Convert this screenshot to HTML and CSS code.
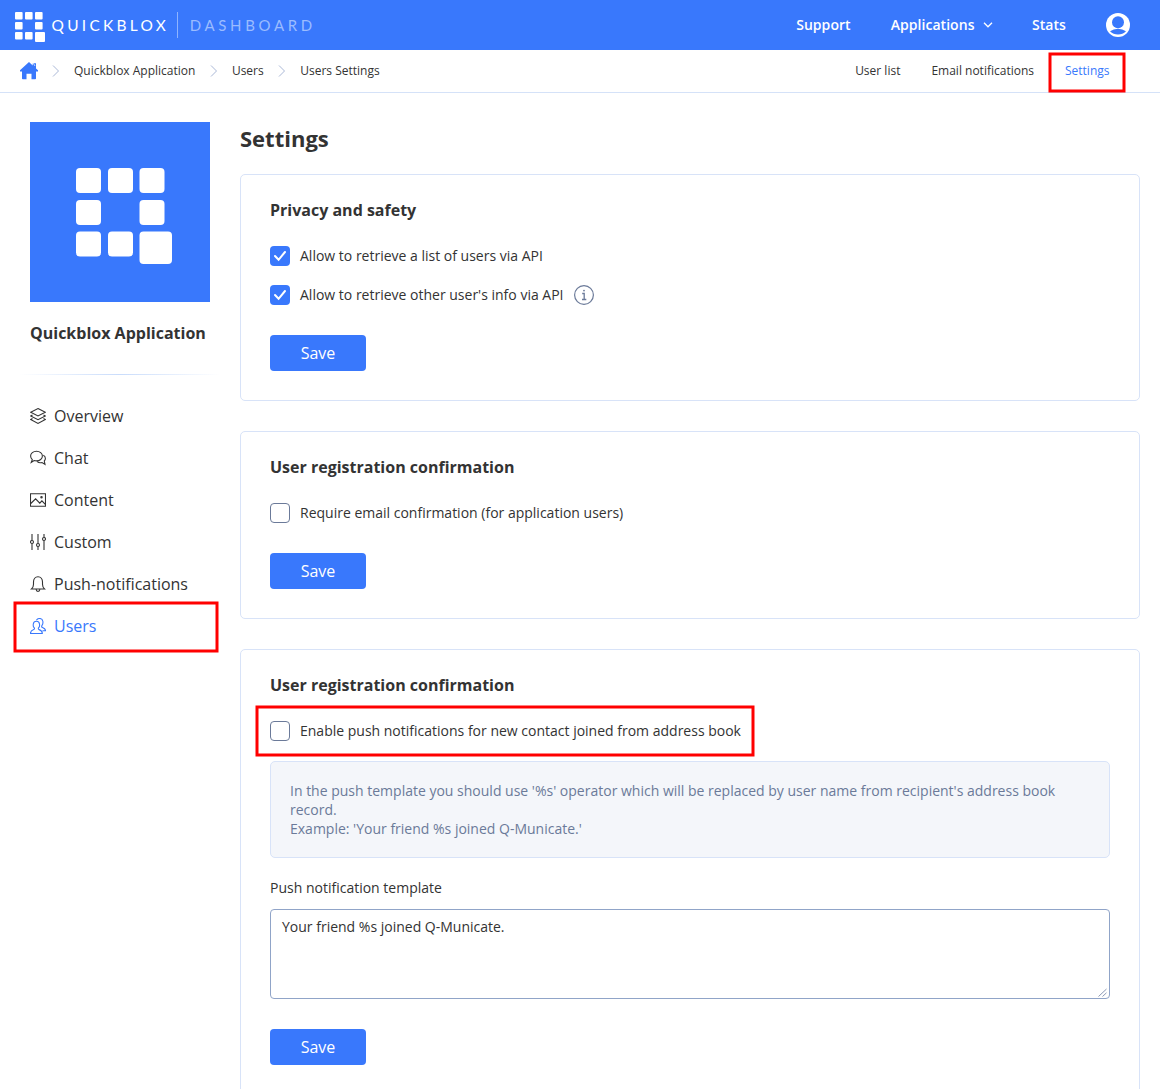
FILE: index.html
```html
<!DOCTYPE html>
<html lang="en">
<head>
<meta charset="utf-8">
<title>Users Settings</title>
<link rel="stylesheet" href="styles.css">
</head>
<body>
<header class="topbar">
  <svg class="logo" width="300" height="32" viewBox="0 0 300 32">
    <g fill="#fff">
      <rect x="0" y="2" width="7.600" height="7.600" rx="1"/><rect x="10" y="2" width="7.600" height="7.600" rx="1"/><rect x="20" y="2" width="7.600" height="7.600" rx="1"/>
      <rect x="0" y="12" width="7.600" height="7.600" rx="1"/><rect x="20" y="12" width="7.600" height="7.600" rx="1"/>
      <rect x="0" y="22" width="7.600" height="7.600" rx="1"/><rect x="10" y="22" width="7.600" height="7.600" rx="1"/><rect x="20" y="22" width="10" height="10" rx="1"/>
    </g>
    <text class="logo-text" x="36.500" y="21" textLength="117.500" lengthAdjust="spacingAndGlyphs">QUICKBLOX</text>
    <path d="M162.500 2v26" stroke="#8fb4ff"/>
    <text class="logo-text logo-sub" x="174.800" y="21" textLength="126" lengthAdjust="spacingAndGlyphs">DASHBOARD</text>
  </svg>
  <nav class="topnav">
    <a>Support</a>
    <a class="apps">Applications <svg width="10" height="6" viewBox="0 0 10 6" fill="none" stroke="#fff" stroke-width="1.300"><path d="M1 .8l4 4 4-4"/></svg></a>
    <a>Stats</a>
    <svg class="avatar" width="24" height="24" viewBox="0 0 24 24"><circle cx="12" cy="12" r="12" fill="#fff"/><circle cx="12" cy="9.200" r="6" fill="#3978fc"/><path d="M4 18.300q3.500-2.500 8-2.500t8 2.500q-3.300 3.300-8 3.300t-8-3.300z" fill="#3978fc"/></svg>
  </nav>
</header>
<div class="subbar">
  <div class="crumbs">
    <svg class="home" width="18" height="18" viewBox="0 0 18 18" fill="#3978fc"><path d="M9 0l3.700 3.400V2.100L12 1.200h4v5.200L18 8.300v1.200h-2V16.500q0 .8-.8.8h-3.700v-5.500H6.500v5.500H2.800q-.8 0-.8-.8V9.500H0V8.300z"/><path d="M11.500 1.500h2l1.500 2.500" stroke="#fff" stroke-width=".7" fill="none"/></svg>
    <svg class="sep" width="8" height="12" viewBox="0 0 8 12"><path d="M1 .5L6.500 6 1 11.500"/></svg>
    <span class="crumb-app">Quickblox Application</span>
    <svg class="sep" width="8" height="12" viewBox="0 0 8 12"><path d="M1 .5L6.500 6 1 11.500"/></svg>
    <span class="crumb-users">Users</span>
    <svg class="sep" width="8" height="12" viewBox="0 0 8 12"><path d="M1 .5L6.500 6 1 11.500"/></svg>
    <span>Users Settings</span>
  </div>
  <nav class="tabs">
    <a>User list</a><a>Email notifications</a><a class="tab-active">Settings<svg class="mark mark-tab" width="78" height="41"><rect x="2" y="2" width="74" height="37"/></svg></a>
  </nav>
</div>
<div class="page">
  <aside class="sidebar">
    <svg class="app-image" width="180" height="180" viewBox="0 0 180 180">
      <path fill="#3978fc" d="M0 0h180v180H0z"/>
      <g fill="#fff">
        <rect x="46" y="46" width="25" height="25" rx="4"/><rect x="78" y="46" width="25" height="25" rx="4"/><rect x="109.500" y="46" width="25" height="25" rx="4"/>
        <rect x="46" y="78" width="25" height="25" rx="4"/><rect x="109.500" y="78" width="25" height="25" rx="4"/>
        <rect x="46" y="109.500" width="25" height="25" rx="4"/><rect x="78" y="109.500" width="25" height="25" rx="4"/><rect x="109.500" y="109.500" width="32.500" height="32.500" rx="4"/>
      </g>
    </svg>
    <div class="app-name">Quickblox Application</div>
    <div class="divider"></div>
    <nav class="menu">
      <a><svg viewBox="0 0 16 16"><path d="M8 .6l7.300 3.700L8 8 .7 4.300zM2.500 7L.7 8 8 11.700 15.300 8l-1.800-1M2.500 10.600l-1.800 1L8 15.400l7.300-3.800-1.800-1"/></svg>Overview</a>
      <a><svg viewBox="0 0 16 16"><path d="M1.300 12.300l1-2.700C1.300 8.700.6 7.500.6 6.100c0-2.700 2.600-4.800 5.900-4.800s5.900 2.100 5.900 4.800-2.600 4.800-5.900 4.800c-.9 0-1.700-.1-2.400-.4zM13.300 5.300c1.300.6 2.100 1.800 2.100 3.200 0 1-.4 1.800-1.100 2.500l.7 3.300-3-1.700c-1.600.4-3.600.1-4.800-.9"/></svg>Chat</a>
      <a><svg viewBox="0 0 16 16"><path d="M.5 1.700h15v12.600H.5zM.8 11.500l4.800-4.700 4.200 4.300 2.100-2.200 3.400 3.500"/><circle cx="11.500" cy="5.200" r=".7"/></svg>Content</a>
      <a><svg viewBox="0 0 16 16"><path d="M2 0v6.500M2 9.500V16M8 0v9.500M8 12.500V16M14 0v3.500M14 6.500V16"/><circle cx="2" cy="8" r="1.500"/><circle cx="8" cy="11" r="1.500"/><circle cx="14" cy="5" r="1.500"/></svg>Custom</a>
      <a><svg viewBox="0 0 16 16"><path d="M1.500 13h13c-1.500-1.300-2-2.500-2-4.700V6c0-3-1.700-5.300-4.500-5.300S3.500 3 3.500 6v2.300c0 2.200-.5 3.400-2 4.700zM6.100 13.300c.1 1.300.8 2.100 1.900 2.100s1.800-.8 1.900-2.100"/></svg>Push-notifications</a>
      <a class="active"><svg viewBox="0 0 16 16"><path d="M.5 15.500c-.1-2.600 1-3.200 3.200-3.900 1-.3.900-1.300.4-1.900C2.900 8.500 2.400 3.200 6.400 3.200s3.500 5.300 2.300 6.500c-.5.600-.6 1.600.4 1.900 2.200.7 3.300 1.300 3.200 3.900zM6.500 2.100C7.200 1 8.200.5 9.700.5c3.900 0 3.700 5 2.300 6.900-.5.600-.5 1.800.5 2.200 2 .8 3.100 1.300 3 3.200h-3"/></svg>Users<svg class="mark mark-users" width="206" height="52"><rect x="2" y="2" width="202" height="48"/></svg></a>
    </nav>
  </aside>
  <main class="main">
    <h1>Settings</h1>
    <section class="card">
      <h2>Privacy and safety</h2>
      <label class="check"><span class="box on"><svg width="14" height="12" viewBox="0 0 14 12"><path d="M2 6l3.600 3.800L12 2"/></svg></span><span class="check-text">Allow to retrieve a list of users via API</span></label>
      <label class="check"><span class="box on"><svg width="14" height="12" viewBox="0 0 14 12"><path d="M2 6l3.600 3.800L12 2"/></svg></span><span class="check-text">Allow to retrieve other user's info via API</span>
        <svg class="info" width="20" height="20" viewBox="0 0 20 20" fill="none" stroke="#6b7a99"><circle cx="10" cy="10" r="9.400" stroke-width="1.200"/><path d="M8.200 8.500h2v6M8 14.500h4.300" stroke-width="1.300"/><circle cx="10" cy="5.600" r=".9" fill="#6b7a99" stroke="none"/></svg></label>
      <button class="save">Save</button>
    </section>
    <section class="card">
      <h2>User registration confirmation</h2>
      <label class="check"><span class="box"></span><span class="check-text">Require email confirmation (for application users)</span></label>
      <button class="save">Save</button>
    </section>
    <section class="card">
      <h2>User registration confirmation</h2>
      <label class="check push"><span class="box"></span><span class="check-text">Enable push notifications for new contact joined from address book</span><svg class="mark mark-push" width="500" height="52"><rect x="2" y="2" width="496" height="48"/></svg></label>
      <div class="note">In the push template you should use '%s' operator which will be replaced by user name from recipient's address book record.<br>Example: 'Your friend %s joined Q-Municate.'</div>
      <div class="field-label">Push notification template</div>
      <div class="area">Your friend %s joined Q-Municate.<svg class="grip" width="9" height="9" viewBox="0 0 9 9" stroke="#8b98b5"><path d="M.5 8.500l8-7.500M4.500 8.500l4-3.700"/></svg></div>
      <button class="save">Save</button>
    </section>
  </main>
</div>
</body>
</html>
```
FILE: styles.css
```css
* { box-sizing: border-box; }
body { margin: 0; height: 1089px; overflow: hidden; background: #fff; color: #333; font: 14px/19px "Open Sans", sans-serif; }
svg { display: block; flex: none; }
.topbar { height: 50px; background: #3978fc; display: flex; justify-content: space-between; padding: 0 30px 0 15px; align-items: center; }
.logo { overflow: visible; margin-top: 2px; }
.logo-text { font: 400 16px Lato, sans-serif; letter-spacing: 3.4px; fill: #fff; }
.logo-sub { letter-spacing: 3.9px; fill: #9bbcff; }
.topnav { display: flex; align-items: center; color: #fff; font-weight: 600; letter-spacing: .05px; }
.topnav a { margin: 0 40px 2px 0; }
.topnav .apps { display: flex; align-items: center; gap: 8px; margin-right: 39.5px; }
.apps svg { margin-top: 1px; }
.subbar { height: 43px; border-bottom: 1px solid #d5e2f8; display: flex; justify-content: space-between; padding: 0 50.5px 2px 20px; font-size: 12px; }
.crumbs { display: flex; align-items: center; }
.home { margin-top: 2px; }
.sep { fill: none; stroke: #a9b7d6; margin: 2px 14px 0; }
.crumb-app, .crumb-users { margin-right: .5px; }
.tabs { display: flex; gap: 31px; align-items: center; }
.tab-active { color: #3978fc; position: relative; }
.mark { position: absolute; pointer-events: none; }
.mark rect { fill: none; stroke: #f00; stroke-width: 3; }
.mark-tab { left: -17px; top: -9px; }
.page { display: flex; padding: 29px 20px 0 30px; gap: 30px; }
.sidebar { width: 180px; flex: none; }
.app-name { font: 700 16px/22px "Open Sans", sans-serif; margin-top: 20px; white-space: nowrap; }
.divider { height: 1px; margin: 30px -10px 0; background: linear-gradient(90deg, #fff, #c9dcfb 50%, #fff); }
.menu { margin-top: 20px; }
.menu a { position: relative; height: 42px; display: flex; align-items: center; gap: 8px; font-size: 16px; white-space: nowrap; }
.menu svg:first-child { width: 16px; height: 16px; fill: none; stroke: currentColor; stroke-width: 1.1; }
.menu .active { color: #3978fc; }
.mark-users { left: -17px; top: -4px; }
.main { flex: 1; }
h1 { font-size: 22px; line-height: 30px; margin: 1px 0 21px; }
.card { border: 1px solid #d8e3f8; border-radius: 5px; padding: 24px 29px 29px; margin-bottom: 30px; }
h2 { font-size: 16px; line-height: 22px; margin: 0 0 25px; }
.check { display: flex; align-items: center; height: 20px; margin-bottom: 19px; position: relative; }
.check-text { margin-bottom: 2px; }
.box { width: 20px; height: 20px; border: 1px solid #6b7a99; border-radius: 4px; margin-right: 10px; flex: none; display: flex; align-items: center; justify-content: center; }
.on { background: #3978fc; border: 0; }
.box path { fill: none; stroke: #fff; stroke-width: 2; stroke-linecap: round; }
.info { margin-left: 10px; }
.save { display: block; width: 96px; height: 36px; border: 0; border-radius: 4px; background: #3978fc; color: #fff; font: 16px/22px "Open Sans", sans-serif; margin-top: 30px; padding: 0; }
.push { margin-bottom: 20px; }
.mark-push { left: -15px; top: -16px; }
.note { height: 97px; border: 1px solid #d8e3f8; border-radius: 5px; background: #f4f6fa; color: #6b7a99; padding: 19px; }
.field-label { margin: 20px 0 12px; }
.area { height: 90px; border: 1px solid #90a4c8; border-radius: 4px; padding: 7px 11px; position: relative; }
.grip { position: absolute; right: 2px; bottom: 1px; }
```
